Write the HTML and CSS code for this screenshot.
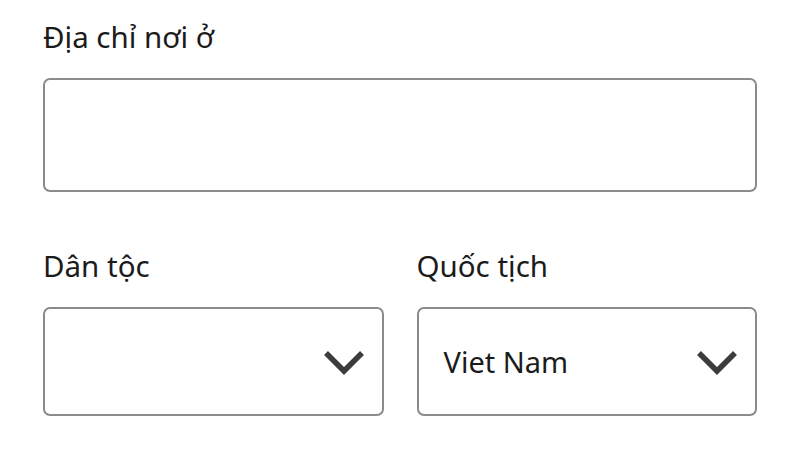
FILE: index.html
```html
<!DOCTYPE html>
<html lang="vi">
<head>
<meta charset="utf-8">
<link rel="stylesheet" href="styles.css">
</head>
<body>
<form class="form">
  <div class="field">
    <label class="label">Địa chỉ nơi ở</label>
    <div class="input"></div>
  </div>
  <div class="row">
    <div class="field">
      <label class="label">Dân tộc</label>
      <div class="select">
        <span class="value"></span>
        <svg class="chev" width="42" height="26" viewBox="0 0 42 26"><polyline points="3,3 21,21 39,3" fill="none" stroke="#3b3c3e" stroke-width="5.5"/></svg>
      </div>
    </div>
    <div class="field">
      <label class="label">Quốc tịch</label>
      <div class="select">
        <span class="value">Viet Nam</span>
        <svg class="chev" width="42" height="26" viewBox="0 0 42 26"><polyline points="3,3 21,21 39,3" fill="none" stroke="#3b3c3e" stroke-width="5.5"/></svg>
      </div>
    </div>
  </div>
</form>
</body>
</html>
```
FILE: styles.css
```css
html, body {
  margin: 0;
  padding: 0;
  background: #ffffff;
}
body {
  font-family: "Noto Sans", "Open Sans", sans-serif;
  color: #1b1b1b;
}
.form {
  padding: 18px 43px 0 43px;
  display: flex;
  flex-direction: column;
  gap: 55px;
}
.field {
  display: flex;
  flex-direction: column;
  gap: 22px;
  flex: 1;
  min-width: 0;
}
.label {
  font-size: 29.5px;
  line-height: 38px;
  height: 38px;
}
.input {
  height: 110px;
  border: 2px solid #8b8b8b;
  border-radius: 7px;
}
.row {
  display: flex;
  gap: 33px;
}
.select {
  height: 105px;
  border: 2px solid #8b8b8b;
  border-radius: 7px;
  display: flex;
  align-items: center;
  justify-content: space-between;
  padding: 0 17px 0 25px;
}
.value {
  font-size: 29px;
  line-height: 38px;
}
.chev {
  display: block;
  margin-top: 2px;
}
```
